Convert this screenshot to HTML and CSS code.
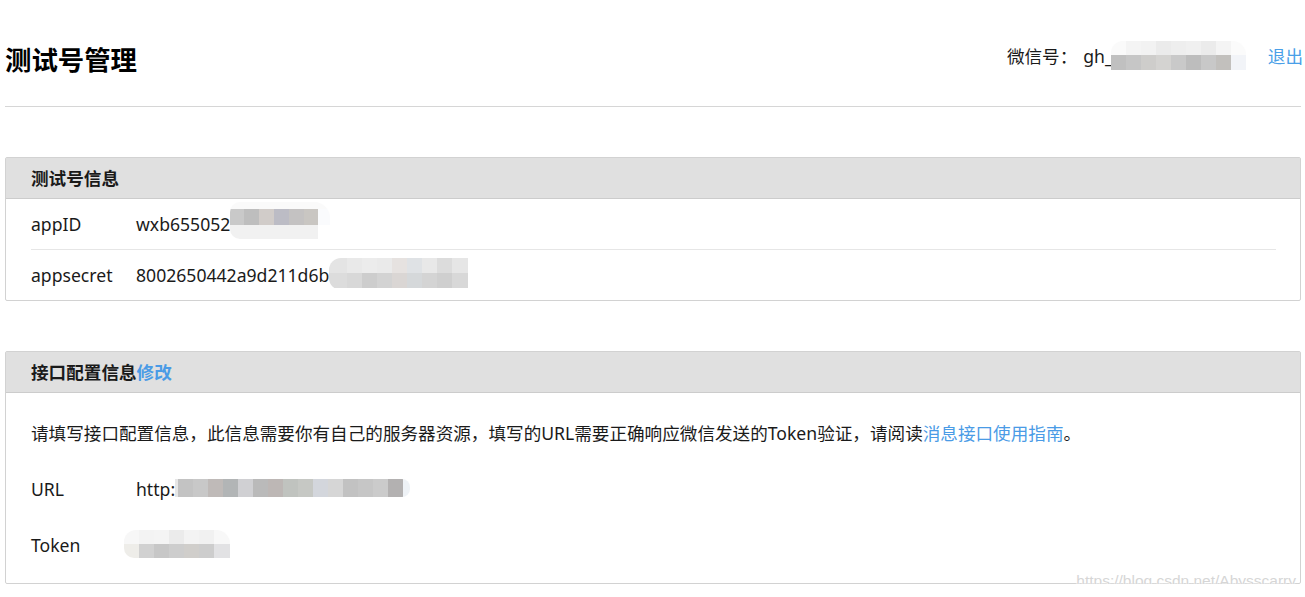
FILE: index.html
```html
<!DOCTYPE html>
<html lang="zh-CN">
<head>
  <meta charset="UTF-8">
  <meta name="viewport" content="width=device-width, initial-scale=1.0">
  <link rel="stylesheet" href="styles.css">
  <title>测试号管理</title>
</head>
<body>
  <div class="page">
    <header class="top">
      <h1>测试号管理</h1>
      <div class="account">
        <span>微信号：</span>
        <span class="gh">gh_</span>
        <span class="mosaic mosaic-gh"></span>
        <a href="#" class="logout">退出</a>
      </div>
    </header>

    <section class="panel panel-info">
      <div class="panel-head">测试号信息</div>
      <div class="panel-body">
        <div class="row row-line">
          <span class="label">appID</span>
          <span class="value">wxb655052<span class="mosaic mosaic-id"></span></span>
        </div>
        <div class="row">
          <span class="label">appsecret</span>
          <span class="value">8002650442a9d211d6b<span class="mosaic mosaic-secret"></span></span>
        </div>
      </div>
    </section>

    <section class="panel panel-config">
      <div class="panel-head">接口配置信息<a href="#" class="link">修改</a></div>
      <div class="panel-body">
        <p class="tip">请填写接口配置信息，此信息需要你有自己的服务器资源，填写的URL需要正确响应微信发送的Token验证，请阅读<a href="#" class="link">消息接口使用指南</a>。</p>
        <div class="row">
          <span class="label">URL</span>
          <span class="value">http:<span class="mosaic mosaic-url"></span></span>
        </div>
        <div class="row">
          <span class="label">Token</span>
          <span class="value"><span class="mosaic mosaic-token"></span></span>
        </div>
      </div>
      <span class="watermark">https://blog.csdn.net/Abysscarry</span>
    </section>
  </div>
</body>
</html>
```

FILE: styles.css
```css
body {
    margin: 0;
    padding: 0;
    background-color: #fff;
    color: #1a1a1a;
    font-family: "Noto Sans", "Noto Sans CJK SC", sans-serif;
    font-size: 17.6px;
}

a {
    text-decoration: none;
}

.page {
    padding: 0 4px 0 5px;
}

.top {
    display: flex;
    justify-content: space-between;
    align-items: flex-start;
    height: 106px;
    border-bottom: 1px solid #d6d6d6;
}

.top h1 {
    margin: 42px 0 0 0;
    font-size: 26.4px;
    line-height: 36px;
    font-weight: bold;
    color: #000;
}

.account {
    display: flex;
    align-items: center;
    margin-top: 41px;
    margin-right: -2px;
    line-height: 24px;
}

.gh {
    margin-left: 6px;
}

.logout {
    margin-left: 22px;
    color: #4a9fe8;
}

.link {
    color: #4a9be6;
}

.panel {
    position: relative;
    border: 1px solid #d2d2d2;
    border-radius: 2px;
    margin-top: 50px;
}

.panel-head {
    background-color: #e0e0e0;
    border-bottom: 1px solid #cccccc;
    height: 40px;
    line-height: 40px;
    padding: 0 25px;
    font-weight: bold;
}

.panel-head .link {
    font-weight: bold;
}

.panel-info .panel-body {
    padding: 0 24px 0 25px;
}

.row {
    display: flex;
    align-items: center;
    height: 50px;
}

.row-line {
    border-bottom: 1px solid #e6e6e6;
}

.label {
    width: 105px;
    flex-shrink: 0;
}

.value {
    display: flex;
    align-items: center;
}

.panel-config .panel-body {
    padding: 12px 25px 10px 25px;
}

.panel-config .row,
.tip {
    height: 56px;
}

.tip {
    margin: 0;
    line-height: 56px;
    white-space: nowrap;
}

.mosaic {
    display: inline-block;
    flex-shrink: 0;
    background-repeat: no-repeat;
}

.mosaic-gh {
    width: 135px;
    height: 30px;
    margin-left: -2px;
    border-radius: 12px 14px 0 0;
    background:
        linear-gradient(to right, #c0c0c0 0 15px, #c6c6c6 15px 30px, #cecdcb 30px 45px, #d4d3d1 45px 60px, #c9c9c9 60px 75px, #bdbdbd 75px 90px, #c8c8c8 90px 105px, #c2c0bd 105px 120px, #f2f4f8 120px 135px) 0 14px / 135px 15px no-repeat,
        linear-gradient(to right, #fafafa 0 15px, #f4f4f4 15px 30px, #f2f2f2 30px 45px, #ebebeb 45px 60px, #eeeeee 60px 75px, #f0f0f0 75px 90px, #ebebeb 90px 105px, #f4f4f4 105px 120px, #fbfbfb 120px 135px) 0 0 / 135px 14px no-repeat;
}

.mosaic-id {
    width: 100px;
    height: 37px;
    margin-top: -8px;
    background:
        linear-gradient(to right, #c9c9c9 0 14px, #bebebe 14px 29px, #d1ccc9 29px 44px, #bcbcc5 44px 59px, #c4c2c2 59px 74px, #c9c6c2 74px 88px, #fafbfd 88px 100px) 0 7px / 100px 16px no-repeat,
        linear-gradient(to right, #f1f1f1 0 88px) 0 23px / 88px 14px no-repeat,
        linear-gradient(to right, #fafafa 0 100px) 0 0 / 100px 7px no-repeat;
    border-radius: 10px 16px 0 10px;
}

.mosaic-secret {
    width: 139px;
    height: 32px;
    margin-top: -3px;
    border-radius: 12px 0 0 12px;
    background:
        linear-gradient(to right, #e4e4e4 0 18px, #e9e9e9 18px 33px, #ececec 33px 48px, #eaeaea 48px 63px, #e6e2e0 63px 78px, #dfe2e5 78px 93px, #e8e8e8 93px 108px, #dcdcdc 108px 123px, #e6e6e6 123px 139px) 0 0 / 139px 15px no-repeat,
        linear-gradient(to right, #dcdcdc 0 18px, #d8d8d8 18px 33px, #cdcdcd 33px 48px, #d3d3d3 48px 63px, #dad6d4 63px 78px, #d5d8da 78px 93px, #d4d4d4 93px 108px, #cfcfcf 108px 123px, #d8d8d8 123px 139px) 0 15px / 139px 15px no-repeat;
}

.mosaic-url {
    width: 235px;
    height: 18px;
    margin-top: -2px;
    background:
        linear-gradient(to right, #e6e6e6 0 3px, #c3c3c3 3px 18px, #c8c8c8 18px 33px, #bfbab8 33px 48px, #b2b5b6 48px 63px, #d0d0d3 63px 78px, #bababa 78px 93px, #bdb7b5 93px 108px, #c0c3bf 108px 123px, #c6c8c4 123px 138px, #d3d6dc 138px 153px, #d6d6d6 153px 168px, #c2c2c2 168px 183px, #c6c6c6 183px 198px, #cbcbcb 198px 213px, #b3b1b1 213px 228px, #eef2f6 228px 235px);
    border-radius: 0 8px 8px 0;
}

.mosaic-token {
    width: 106px;
    height: 28px;
    margin-left: -12px;
    margin-top: -2px;
    border-radius: 12px 14px 0 10px;
    background:
        linear-gradient(to right, #f7f7f7 0 15px, #f3f3f3 15px 30px, #f4f4f4 30px 45px, #ebebeb 45px 60px, #f3f3f3 60px 75px, #f1f1f1 75px 90px, #f8f8f8 90px 106px) 0 0 / 106px 14px no-repeat,
        linear-gradient(to right, #eeede9 0 15px, #d1d1d1 15px 30px, #c7c7c7 30px 45px, #cdcdcd 45px 60px, #d0cecb 60px 75px, #cdcdcd 75px 90px, #e2e2e4 90px 106px) 0 14px / 106px 14px no-repeat;
}

.watermark {
    position: absolute;
    right: 4px;
    bottom: -7px;
    font-family: "Liberation Sans", sans-serif;
    font-size: 15.5px;
    line-height: 18px;
    color: #d6d6d6;
    text-shadow: 0 0 2px #fff, 0 0 2px #fff;
    white-space: nowrap;
}
```
